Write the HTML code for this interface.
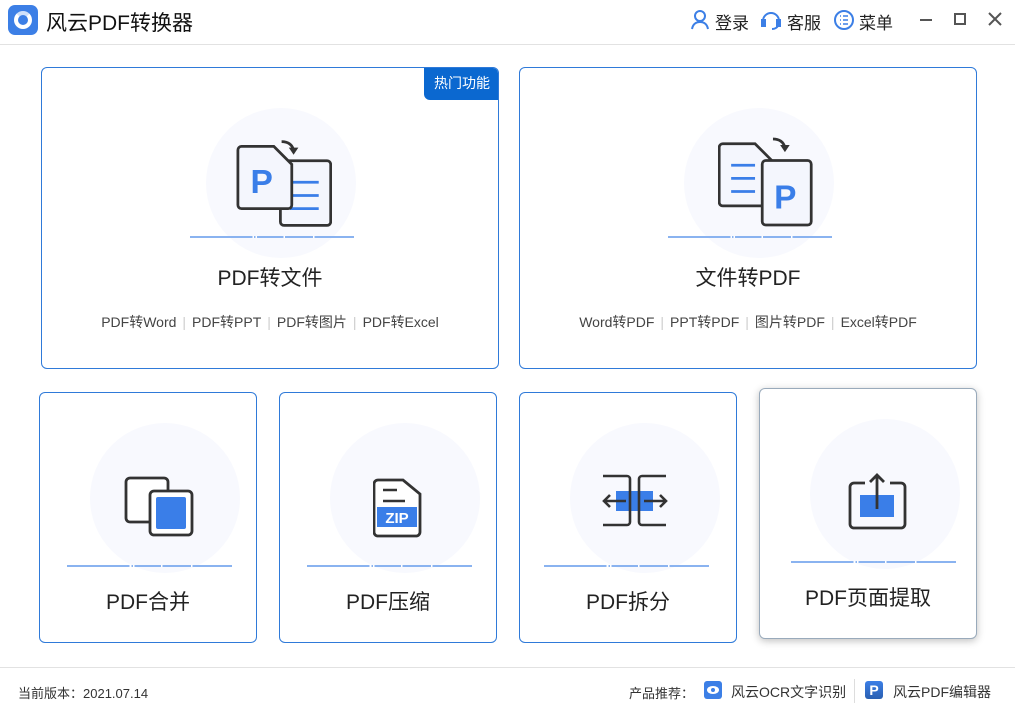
<!DOCTYPE html>
<html><head><meta charset="utf-8"><style>
*{margin:0;padding:0;box-sizing:border-box}
body{width:1015px;height:710px;background:#fff;font-family:"Liberation Sans","Noto Sans CJK SC",sans-serif;position:relative;overflow:hidden;color:#222}
.abs{position:absolute}
.card{position:absolute;border:1px solid #2f7ad9;border-radius:6px;background:#fff;overflow:hidden}
.blob{position:absolute;border-radius:50%;background:#f8f9fe}
.dash{position:absolute;height:2px;background:linear-gradient(90deg,#8ab3f0 0 38%,#fff 38% 39%,#8ab3f0 39% 40%,#fff 40% 41%,#8ab3f0 41% 57%,#fff 57% 58%,#8ab3f0 58% 75%,#fff 75% 76%,#8ab3f0 76% 100%)}
.t{position:absolute;width:100%;text-align:center;font-size:21px;color:#222}
.sub{position:absolute;width:100%;text-align:center;font-size:14px;color:#444}
.sub span.s{color:#ccc;margin:0 6px}
</style></head><body>
<div class="abs" style="left:8px;top:5px;width:30px;height:30px;background:#3c7fe6;border-radius:7px"></div>
<div class="abs" style="left:14px;top:11px;width:18px;height:18px;border-radius:50%;border:4px solid #fff;border-top-color:#cfe0fa"></div>
<div class="abs" style="left:19px;top:16px;width:8px;height:8px;border-radius:50%;background:#3c7fe6"></div>
<div class="abs" style="left:46px;top:7px;font-size:21px;color:#111">风云PDF转换器</div>
<svg class="abs" style="left:689px;top:9px" width="22" height="22" viewBox="0 0 22 22" fill="none" stroke="#3c7fe6" stroke-width="2"><circle cx="11" cy="7" r="5"/><path d="M3 20c1-5 4-7 8-7s7 2 8 7"/></svg>
<div class="abs" style="left:715px;top:9px;font-size:17px">登录</div>
<svg class="abs" style="left:760px;top:9px" width="22" height="22" viewBox="0 0 22 22" fill="none" stroke="#3c7fe6" stroke-width="2"><path d="M3 12a8 8 0 0 1 16 0"/><rect x="2" y="11" width="3" height="6" fill="#3c7fe6"/><rect x="17" y="11" width="3" height="6" fill="#3c7fe6"/><path d="M18 17q-2 3-6 3"/></svg>
<div class="abs" style="left:787px;top:9px;font-size:17px">客服</div>
<svg class="abs" style="left:833px;top:9px" width="22" height="22" viewBox="0 0 22 22" fill="none" stroke="#3c7fe6" stroke-width="2"><circle cx="11" cy="11" r="9"/><path d="M7 7h1M10 7h5M7 11h1M10 11h5M7 15h1M10 15h5" stroke-width="1.6"/></svg>
<div class="abs" style="left:859px;top:9px;font-size:17px">菜单</div>
<div class="abs" style="left:920px;top:19px;width:12px;height:2px;background:#555"></div>
<div class="abs" style="left:954px;top:13px;width:12px;height:12px;border:2px solid #555"></div>
<svg class="abs" style="left:988px;top:12px" width="14" height="14"><path d="M1 1L13 13M13 1L1 13" stroke="#555" stroke-width="2"/></svg>
<div class="abs" style="left:0;top:44px;width:1015px;height:1px;background:#e2e2e2"></div>

<div class="card" style="left:41px;top:67px;width:458px;height:302px">
 <div class="blob" style="left:164px;top:40px;width:150px;height:150px"></div>
 <div class="abs" style="left:382px;top:0;width:76px;height:32px;background:#0b68d0;border-bottom-left-radius:6px;color:#fff;font-size:14px;text-align:center;line-height:31px">热门功能</div>
 <svg class="abs" style="left:194px;top:70px" width="96" height="91" viewBox="0 0 80 76">
  <path d="M38 3q8 0 10 7" fill="none" stroke="#333" stroke-width="2.3"/><path d="M44 8l4 6 4-6z" fill="#333"/>
  <rect x="37" y="19" width="42" height="54" rx="3" fill="#f4f6fd" stroke="#333" stroke-width="2.3"/>
  <path d="M45 37h24M45 48h24M45 59h24" stroke="#3a7ee8" stroke-width="2.3"/>
  <path d="M3 7h27l15 15v34a3 3 0 0 1-3 3H3a3 3 0 0 1-3-3V10a3 3 0 0 1 3-3z" transform="translate(1.5 0)" fill="#f4f6fd" stroke="#333" stroke-width="2.3"/>
  <text x="12" y="46" font-family="Liberation Sans" font-weight="bold" font-size="28" fill="#3a7ee8">P</text>
 </svg>
 <div class="dash" style="left:148px;top:168px;width:164px"></div>
 <div class="t" style="top:194px">PDF转文件</div>
 <div class="sub" style="top:244px">PDF转Word<span class="s">|</span>PDF转PPT<span class="s">|</span>PDF转图片<span class="s">|</span>PDF转Excel</div>
</div>

<div class="card" style="left:519px;top:67px;width:458px;height:302px">
 <div class="blob" style="left:164px;top:40px;width:150px;height:150px"></div>
 <svg class="abs" style="left:198px;top:66px" width="98" height="96" viewBox="0 0 82 80">
  <path d="M46 4q8 0 10 7" fill="none" stroke="#333" stroke-width="2.3"/><path d="M52 9l4 6 4-6z" fill="#333"/>
  <path d="M4 8h27l15 15v34a3 3 0 0 1-3 3H4a3 3 0 0 1-3-3V11a3 3 0 0 1 3-3z" fill="#f4f6fd" stroke="#333" stroke-width="2.3"/>
  <path d="M11 26h20M11 37h20M11 48h20" stroke="#3a7ee8" stroke-width="2.3"/>
  <rect x="37" y="22" width="41" height="54" rx="3" fill="#f4f6fd" stroke="#333" stroke-width="2.3"/>
  <text x="47" y="62" font-family="Liberation Sans" font-weight="bold" font-size="28" fill="#3a7ee8">P</text>
 </svg>
 <div class="dash" style="left:148px;top:168px;width:164px"></div>
 <div class="t" style="top:194px">文件转PDF</div>
 <div class="sub" style="top:244px">Word转PDF<span class="s">|</span>PPT转PDF<span class="s">|</span>图片转PDF<span class="s">|</span>Excel转PDF</div>
</div>

<div class="card" style="left:39px;top:392px;width:218px;height:251px">
 <div class="blob" style="left:50px;top:30px;width:150px;height:150px"></div>
 <svg class="abs" style="left:84px;top:83px" width="70" height="62" viewBox="0 0 70 62">
  <rect x="2" y="2" width="42" height="44" rx="4" fill="#fff" stroke="#333" stroke-width="2.8"/>
  <rect x="26" y="15" width="42" height="44" rx="4" fill="#fff" stroke="#333" stroke-width="2.8"/>
  <rect x="32" y="21" width="30" height="32" rx="2" fill="#3a7ee8"/>
 </svg>
 <div class="dash" style="left:27px;top:172px;width:165px"></div>
 <div class="t" style="top:193px">PDF合并</div>
</div>

<div class="card" style="left:279px;top:392px;width:218px;height:251px">
 <div class="blob" style="left:50px;top:30px;width:150px;height:150px"></div>
 <svg class="abs" style="left:93px;top:85px" width="50" height="60" viewBox="0 0 50 60">
  <path d="M5 2h25l17 14v38a4 4 0 0 1-4 4H5a4 4 0 0 1-4-4V6a4 4 0 0 1 4-4z" fill="#fff" stroke="#333" stroke-width="2.8"/>
  <path d="M10 12h14M10 23h22" stroke="#333" stroke-width="2.6"/>
  <rect x="4" y="29" width="40" height="20" fill="#3a7ee8"/>
  <text x="24" y="45" text-anchor="middle" font-family="Liberation Sans" font-weight="bold" font-size="15" fill="#fff">ZIP</text>
 </svg>
 <div class="dash" style="left:27px;top:172px;width:165px"></div>
 <div class="t" style="top:193px">PDF压缩</div>
</div>

<div class="card" style="left:519px;top:392px;width:218px;height:251px">
 <div class="blob" style="left:50px;top:30px;width:150px;height:150px"></div>
 <svg class="abs" style="left:80px;top:81px" width="70" height="62" viewBox="0 0 70 62">
  <rect x="16" y="17" width="37" height="20" fill="#3a7ee8"/>
  <path d="M3 2h24a3 3 0 0 1 3 3v43a3 3 0 0 1-3 3H3M66 2H42a3 3 0 0 0-3 3v43a3 3 0 0 0 3 3h24" fill="none" stroke="#333" stroke-width="2.6"/>
  <path d="M26 27H4M10 21l-6 6 6 6M44 27h22M60 21l6 6-6 6" fill="none" stroke="#333" stroke-width="2.6"/>
 </svg>
 <div class="dash" style="left:24px;top:172px;width:165px"></div>
 <div class="t" style="top:193px">PDF拆分</div>
</div>

<div class="card" style="left:759px;top:388px;width:218px;height:251px;box-shadow:0 2px 8px rgba(0,0,0,.25);border-color:#9ab">
 <div class="blob" style="left:50px;top:30px;width:150px;height:150px"></div>
 <svg class="abs" style="left:87px;top:84px" width="62" height="58" viewBox="0 0 62 58">
  <path d="M18 10H7a4 4 0 0 0-4 4v37a4 4 0 0 0 4 4h47a4 4 0 0 0 4-4V14a4 4 0 0 0-4-4H43" fill="none" stroke="#333" stroke-width="2.8"/>
  <rect x="13" y="22" width="34" height="22" fill="#3a7ee8"/>
  <path d="M30 36V2M23 9l7-7 7 7" fill="none" stroke="#333" stroke-width="2.8"/>
 </svg>
 <div class="dash" style="left:31px;top:172px;width:165px"></div>
 <div class="t" style="top:193px">PDF页面提取</div>
</div>

<div class="abs" style="left:0;top:667px;width:1015px;height:1px;background:#e2e2e2"></div>
<div class="abs" style="left:18px;top:683px;font-size:13px;color:#333">当前版本：2021.07.14</div>
<div class="abs" style="left:629px;top:683px;font-size:13px;color:#333">产品推荐：</div>
<div class="abs" style="left:704px;top:681px;width:18px;height:18px;background:#3c7fe6;border-radius:3px"></div>
<div class="abs" style="left:707px;top:686px;width:12px;height:8px;border-radius:50%;background:#fff"></div>
<div class="abs" style="left:711px;top:688px;width:4px;height:4px;border-radius:50%;background:#3c7fe6"></div>
<div class="abs" style="left:731px;top:682px;font-size:14px;color:#333">风云OCR文字识别</div>
<div class="abs" style="left:854px;top:679px;width:1px;height:24px;background:#ddd"></div>
<div class="abs" style="left:865px;top:681px;width:18px;height:18px;background:linear-gradient(#3c7fe6,#2a5fb0);border-radius:3px;color:#fff;font-size:14px;font-weight:bold;text-align:center;line-height:18px">P</div>
<div class="abs" style="left:893px;top:682px;font-size:14px;color:#333">风云PDF编辑器</div>
</body></html>
